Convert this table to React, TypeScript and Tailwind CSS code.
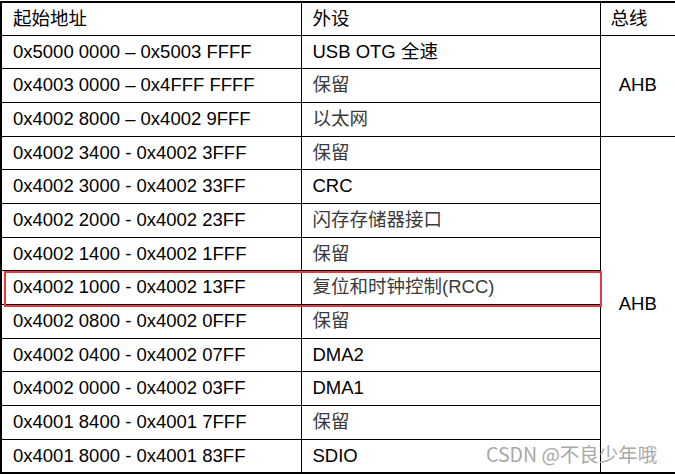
const rows: { range: string; name: string; cjk?: boolean }[] = [
  { range: '0x5000 0000 – 0x5003 FFFF', name: 'USB OTG 全速' },
  { range: '0x4003 0000 – 0x4FFF FFFF', name: '保留', cjk: true },
  { range: '0x4002 8000 – 0x4002 9FFF', name: '以太网', cjk: true },
  { range: '0x4002 3400 - 0x4002 3FFF', name: '保留', cjk: true },
  { range: '0x4002 3000 - 0x4002 33FF', name: 'CRC' },
  { range: '0x4002 2000 - 0x4002 23FF', name: '闪存存储器接口', cjk: true },
  { range: '0x4002 1400 - 0x4002 1FFF', name: '保留', cjk: true },
  { range: '0x4002 1000 - 0x4002 13FF', name: '复位和时钟控制(RCC)', cjk: true },
  { range: '0x4002 0800 - 0x4002 0FFF', name: '保留', cjk: true },
  { range: '0x4002 0400 - 0x4002 07FF', name: 'DMA2' },
  { range: '0x4002 0000 - 0x4002 03FF', name: 'DMA1' },
  { range: '0x4001 8400 - 0x4001 7FFF', name: '保留', cjk: true },
  { range: '0x4001 8000 - 0x4001 83FF', name: 'SDIO' },
]

export default function App() {
  return (
    <div
      className="relative w-[675px] h-[474px] bg-white overflow-hidden pt-[1px] text-black"
      style={{ fontFamily: '"Liberation Sans", "Noto Sans CJK SC", sans-serif' }}
    >
      <table className="border-collapse border-2 border-black text-[18.5px] leading-none w-[675px] table-fixed">
        <colgroup>
          <col className="w-[300px]" />
          <col className="w-[299px]" />
          <col className="w-[76px]" />
        </colgroup>
        <thead>
          <tr className="h-[33px]">
            <th className="border border-black text-left font-normal pl-[11px]">起始地址</th>
            <th className="border border-black text-left font-normal pl-[11px]">外设</th>
            <th className="border border-black text-left font-normal pl-[10px]">总线</th>
          </tr>
        </thead>
        <tbody>
          {rows.map((r, i) => (
            <tr key={i} className="h-[33.7px]">
              <td className="border border-black pl-[11px]">{r.range}</td>
              <td className={`border border-black pl-[11px] ${r.cjk ? 'text-[#3a3a3a]' : ''}`}>{r.name}</td>
              {i === 0 && (
                <td rowSpan={3} className="border border-black text-center">AHB</td>
              )}
              {i === 3 && (
                <td rowSpan={10} className="border border-black text-center">AHB</td>
              )}
            </tr>
          ))}
        </tbody>
      </table>

      {/* highlight on the RCC row */}
      <div className="absolute left-[4px] top-[271px] w-[598px] h-[36px] border-[2.5px] border-[#e8393a]" />

      <div
        className="absolute left-[486px] top-[444px] text-[19.5px] text-[#a8a8a8] leading-none"
        style={{ fontFamily: '"Noto Sans CJK SC", sans-serif' }}
      >
        CSDN @不良少年哦
      </div>
    </div>
  )
}
